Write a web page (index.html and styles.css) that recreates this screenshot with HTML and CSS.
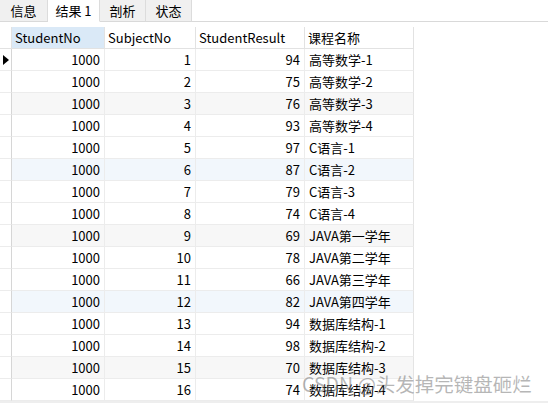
FILE: index.html
```html
<!DOCTYPE html>
<html lang="zh-CN">
<head>
<meta charset="utf-8">
<link rel="stylesheet" href="styles.css">
</head>
<body>
<div class="page">
  <div class="tabbar">
    <div class="tab">信息</div>
    <div class="tab active">结果 1</div>
    <div class="tab">剖析</div>
    <div class="tab">状态</div>
    <div class="tab-fill"></div>
  </div>
  <div class="grid">
    <div class="cell ind hd"></div>
    <div class="cell hd sel">StudentNo</div>
    <div class="cell hd">SubjectNo</div>
    <div class="cell hd">StudentResult</div>
    <div class="cell hd">课程名称</div>

    <div class="cell ind"><span class="arrow"></span></div><div class="cell num">1000</div><div class="cell num">1</div><div class="cell num">94</div><div class="cell txt">高等数学-1</div>
    <div class="cell ind"></div><div class="cell num">1000</div><div class="cell num">2</div><div class="cell num">75</div><div class="cell txt">高等数学-2</div>
    <div class="cell ind"></div><div class="cell num gray">1000</div><div class="cell num gray">3</div><div class="cell num gray">76</div><div class="cell txt gray">高等数学-3</div>
    <div class="cell ind"></div><div class="cell num">1000</div><div class="cell num">4</div><div class="cell num">93</div><div class="cell txt">高等数学-4</div>
    <div class="cell ind"></div><div class="cell num">1000</div><div class="cell num">5</div><div class="cell num">97</div><div class="cell txt">C语言-1</div>
    <div class="cell ind"></div><div class="cell num blue">1000</div><div class="cell num blue">6</div><div class="cell num blue">87</div><div class="cell txt blue">C语言-2</div>
    <div class="cell ind"></div><div class="cell num">1000</div><div class="cell num">7</div><div class="cell num">79</div><div class="cell txt">C语言-3</div>
    <div class="cell ind"></div><div class="cell num">1000</div><div class="cell num">8</div><div class="cell num">74</div><div class="cell txt">C语言-4</div>
    <div class="cell ind"></div><div class="cell num gray">1000</div><div class="cell num gray">9</div><div class="cell num gray">69</div><div class="cell txt gray">JAVA第一学年</div>
    <div class="cell ind"></div><div class="cell num">1000</div><div class="cell num">10</div><div class="cell num">78</div><div class="cell txt">JAVA第二学年</div>
    <div class="cell ind"></div><div class="cell num">1000</div><div class="cell num">11</div><div class="cell num">66</div><div class="cell txt">JAVA第三学年</div>
    <div class="cell ind"></div><div class="cell num blue">1000</div><div class="cell num blue">12</div><div class="cell num blue">82</div><div class="cell txt blue">JAVA第四学年</div>
    <div class="cell ind"></div><div class="cell num">1000</div><div class="cell num">13</div><div class="cell num">94</div><div class="cell txt">数据库结构-1</div>
    <div class="cell ind"></div><div class="cell num">1000</div><div class="cell num">14</div><div class="cell num">98</div><div class="cell txt">数据库结构-2</div>
    <div class="cell ind"></div><div class="cell num gray">1000</div><div class="cell num gray">15</div><div class="cell num gray">70</div><div class="cell txt gray">数据库结构-3</div>
    <div class="cell ind"></div><div class="cell num">1000</div><div class="cell num">16</div><div class="cell num">74</div><div class="cell txt">数据库结构-4</div>
  </div>
  <div class="bottom-line"></div>
  <div class="watermark">CSDN @头发掉完键盘砸烂</div>
</div>
</body>
</html>
```

FILE: styles.css
```css
html, body {
  margin: 0;
  padding: 0;
  background: #ffffff;
}
.page {
  position: relative;
  width: 548px;
  height: 404px;
  overflow: hidden;
  font-family: "Noto Sans CJK SC", "Noto Sans", sans-serif;
  font-size: 13px;
  color: #000000;
}
.tabbar {
  display: flex;
  height: 22px;
}
.tab {
  box-sizing: border-box;
  width: 46px;
  height: 22px;
  line-height: 21px;
  text-align: center;
  background: #f0f0f0;
  border-right: 1px solid #dcdcdc;
  border-bottom: 1px solid #d9d9d9;
  color: #000;
}
.tab:first-child {
  width: 48px;
}
.tab.active {
  width: 52px;
  background: #ffffff;
  border-bottom-color: #ffffff;
}
.tab-fill {
  flex: 1;
  border-bottom: 1px solid #d9d9d9;
}
.grid {
  margin-top: 5px;
  display: grid;
  grid-template-columns: 12px 93px 91px 109px 109px;
  grid-auto-rows: 22px;
  width: 414px;
}
.cell {
  box-sizing: border-box;
  border-right: 1px solid #ececec;
  border-bottom: 1px solid #ececec;
  padding: 0 4px;
  line-height: 21px;
  white-space: nowrap;
  overflow: hidden;
}
.cell.ind {
  padding: 0;
  border-right-color: #d6d6d6;
  display: flex;
  align-items: center;
}
.cell.hd {
  border-right-color: #e2e2e2;
  border-bottom-color: #e2e2e2;
  padding-left: 3px;
}
.cell.hd:last-child {
  border-right-color: #d6d6d6;
}
.cell.hd.sel {
  background: #dae9f7;
}
.cell.num {
  text-align: right;
}
.cell.txt {
  padding-left: 4px;
  border-right-color: #e4e4e4;
}
.cell.gray {
  background: #f7f7f7;
}
.cell.blue {
  background: #f2f7fc;
}
.arrow {
  width: 0;
  height: 0;
  margin-left: 3px;
  border-top: 5px solid transparent;
  border-bottom: 5px solid transparent;
  border-left: 6px solid #000;
}
.bottom-line {
  height: 2px;
  background: #eeeeee;
}
.watermark {
  position: absolute;
  left: 302px;
  top: 373px;
  font-size: 19.5px;
  line-height: 22px;
  color: rgba(110, 110, 110, 0.5);
  white-space: nowrap;
}
```
